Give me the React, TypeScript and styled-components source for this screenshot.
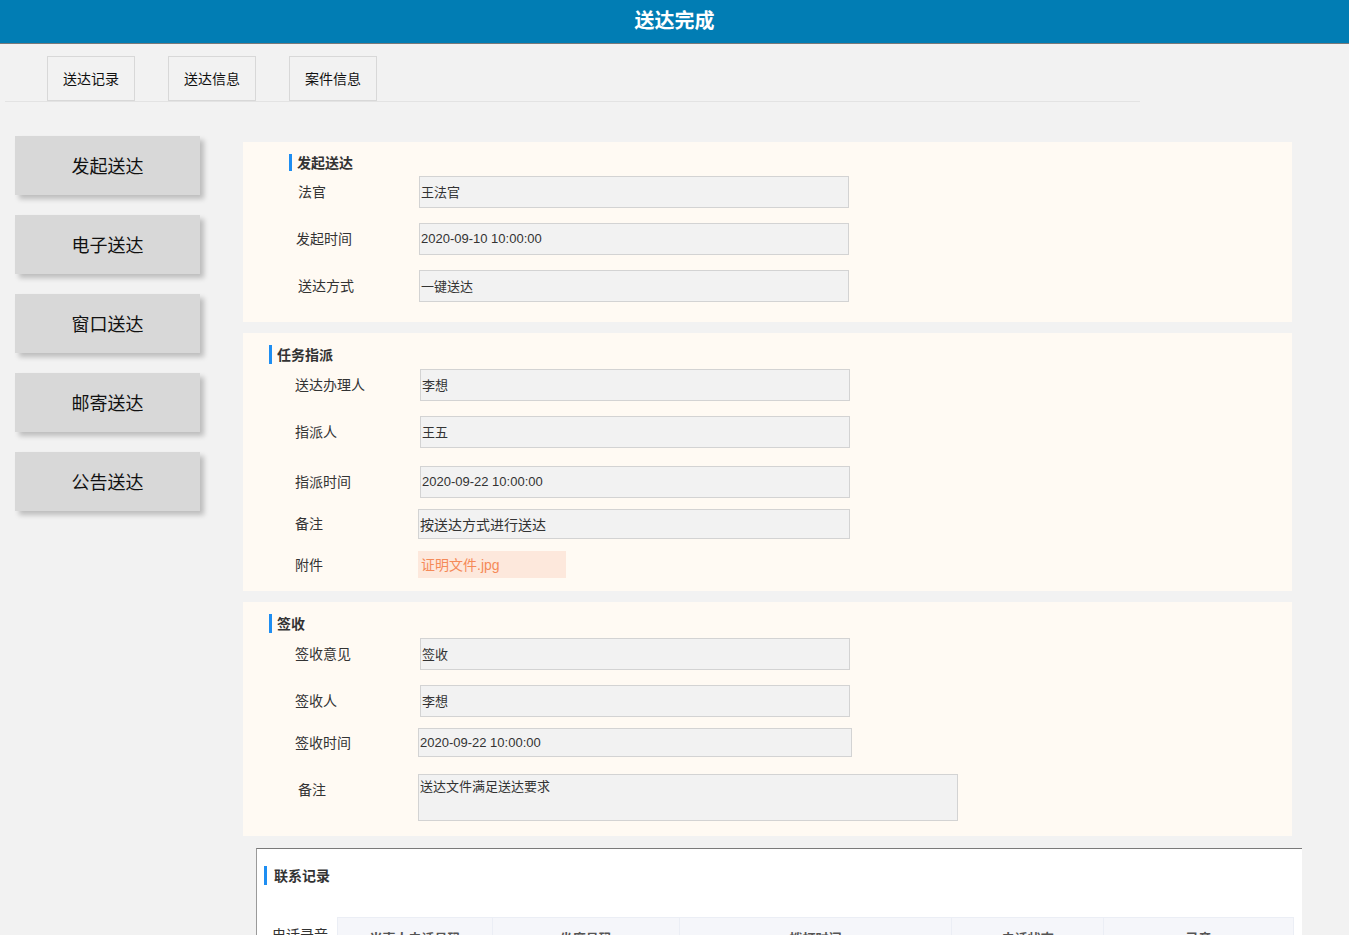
import React from "react";
import styled, { createGlobalStyle } from "styled-components";

const Global = createGlobalStyle`
  html, body { margin: 0; padding: 0; background: #f2f2f2; }
  body { font-family: "Liberation Sans", "Noto Sans CJK SC", sans-serif; color: #333; }
  * { box-sizing: border-box; }
`;

const Header = styled.header`
  height: 44px;
  background: #017db4;
  border-bottom: 1px solid #7a7a7a;
  display: flex;
  align-items: center;
  justify-content: center;
  color: #fff;
  font-size: 20px;
  font-weight: bold;
  padding-bottom: 5px;
`;

const TabBar = styled.nav`
  margin: 12px 0 0 5px;
  width: 1135px;
  height: 46px;
  border-bottom: 1px solid #e3e3e3;
  display: flex;
  gap: 33px;
  padding-left: 42px;
`;

const Tab = styled.div`
  width: 88px;
  height: 45px;
  border: 1px solid #d8d8d8;
  display: flex;
  align-items: center;
  justify-content: center;
  font-size: 14px;
  color: #111;
  padding-bottom: 2px;
`;

const Body = styled.div`
  display: flex;
  margin-top: 34px;
`;

const Sidebar = styled.aside`
  width: 243px;
  flex-shrink: 0;
  padding-left: 15px;
  display: flex;
  flex-direction: column;
  gap: 20px;
`;

const SideButton = styled.div`
  width: 185px;
  height: 59px;
  background: #d8d8d8;
  box-shadow: 4px 4px 5px rgba(0, 0, 0, 0.22);
  display: flex;
  align-items: center;
  justify-content: center;
  font-size: 18px;
  color: #111;
  padding-bottom: 1px;
`;

const Main = styled.main`
  margin-top: 6px;
  display: flex;
  flex-direction: column;
  gap: 11px;
`;

const Panel = styled.section<{ $pb: number }>`
  width: 1049px;
  background: #fffaf3;
  padding: 12px 0 ${(p) => p.$pb}px;
  display: flex;
  flex-direction: column;
`;

const Title = styled.h3<{ $indent: number; $h: number }>`
  margin: 0 0 5px ${(p) => p.$indent}px;
  height: ${(p) => p.$h}px;
  border-left: 3px solid #1e8ef2;
  padding: 0 0 1px 5px;
  display: flex;
  align-items: center;
  font-size: 14px;
  font-weight: bold;
  color: #333;
`;

const Field = styled.div<{ $mt: number; $top?: boolean }>`
  display: flex;
  align-items: ${(p) => (p.$top ? "flex-start" : "center")};
  margin-top: ${(p) => p.$mt}px;
`;

const Label = styled.div<{ $indent: number; $w: number; $pt?: number }>`
  margin-left: ${(p) => p.$indent}px;
  width: ${(p) => p.$w}px;
  padding-top: ${(p) => p.$pt ?? 0}px;
  padding-bottom: 2px;
  font-size: 14px;
  color: #333;
  flex-shrink: 0;
`;

const Value = styled.div<{ $w: number; $h: number; $fs?: number; $top?: boolean }>`
  width: ${(p) => p.$w}px;
  height: ${(p) => p.$h}px;
  background: #f2f2f2;
  border: 1px solid #d3d3d3;
  padding: ${(p) => (p.$top ? "1px 1px 0" : "0 1px 1px")};
  display: flex;
  align-items: ${(p) => (p.$top ? "flex-start" : "center")};
  font-size: ${(p) => p.$fs ?? 13}px;
  color: #333;
`;

const Attachment = styled.div`
  width: 148px;
  height: 27px;
  background: #fde8dc;
  color: #f58a58;
  font-size: 14px;
  display: flex;
  align-items: center;
  padding: 0 0 2px 3px;
`;

const RecordPanel = styled.section`
  margin: 1px 0 0 13px;
  width: 1046px;
  height: 200px;
  background: #fff;
  border-top: 1px solid #7a7a7a;
  border-left: 1px solid #9a9a9a;
  padding: 17px 8px 0 7px;
`;

const RecordTitle = styled.h3`
  margin: 0;
  height: 19px;
  border-left: 3px solid #1e8ef2;
  padding: 0 0 1px 7px;
  display: flex;
  align-items: center;
  font-size: 14px;
  font-weight: bold;
  color: #333;
`;

const RecordRow = styled.div`
  margin-top: 32px;
  display: flex;
  align-items: flex-start;
`;

const RecordLabel = styled.div`
  width: 73px;
  padding: 7px 0 0 8px;
  font-size: 14px;
  color: #333;
  flex-shrink: 0;
`;

const Table = styled.table`
  width: 957px;
  border-collapse: collapse;
  font-size: 13px;
`;

const Th = styled.th<{ $w: number }>`
  width: ${(p) => p.$w}px;
  height: 40px;
  background: #f5f6fa;
  border: 1px solid #ebeef5;
  color: #555;
  font-weight: bold;
  text-align: center;
`;

type F = {
  label: string;
  value: string;
  mt: number;
  w?: number;
  h?: number;
  fs?: number;
  shift?: number;
  textarea?: boolean;
  labelPt?: number;
  labelShift?: number;
};

function Fields({ items, indent, labelW }: { items: F[]; indent: number; labelW: number }) {
  return (
    <>
      {items.map((f) => (
        <Field key={f.label + f.value} $mt={f.mt} $top={f.textarea}>
          <Label $indent={indent + (f.labelShift ?? 0)} $w={labelW - (f.labelShift ?? 0) + (f.shift ?? 0)} $pt={f.labelPt}>
            {f.label}
          </Label>
          <Value $w={f.w ?? 430} $h={f.h ?? 32} $fs={f.fs} $top={f.textarea}>
            {f.value}
          </Value>
        </Field>
      ))}
    </>
  );
}

export default function App() {
  return (
    <>
      <Global />
      <Header>送达完成</Header>
      <TabBar>
        <Tab>送达记录</Tab>
        <Tab>送达信息</Tab>
        <Tab>案件信息</Tab>
      </TabBar>
      <Body>
        <Sidebar>
          {["发起送达", "电子送达", "窗口送达", "邮寄送达", "公告送达"].map((t) => (
            <SideButton key={t}>{t}</SideButton>
          ))}
        </Sidebar>
        <Main>
          <Panel $pb={20}>
            <Title $indent={46} $h={17}>发起送达</Title>
            <Fields
              indent={55}
              labelW={121}
              items={[
                { label: "法官", value: "王法官", mt: 0 },
                { label: "发起时间", value: "2020-09-10 10:00:00", mt: 15, labelShift: -2 },
                { label: "送达方式", value: "一键送达", mt: 15 },
              ]}
            />
          </Panel>
          <Panel $pb={13}>
            <Title $indent={26} $h={19}>任务指派</Title>
            <Fields
              indent={52}
              labelW={125}
              items={[
                { label: "送达办理人", value: "李想", mt: 0 },
                { label: "指派人", value: "王五", mt: 15 },
                { label: "指派时间", value: "2020-09-22 10:00:00", mt: 18 },
                { label: "备注", value: "按送达方式进行送达", mt: 11, h: 30, w: 432, shift: -2, fs: 14 },
              ]}
            />
            <Field $mt={12}>
              <Label $indent={52} $w={123}>附件</Label>
              <Attachment>证明文件.jpg</Attachment>
            </Field>
          </Panel>
          <Panel $pb={15}>
            <Title $indent={26} $h={19}>签收</Title>
            <Fields
              indent={52}
              labelW={125}
              items={[
                { label: "签收意见", value: "签收", mt: 0 },
                { label: "签收人", value: "李想", mt: 15 },
                { label: "签收时间", value: "2020-09-22 10:00:00", mt: 11, h: 29, w: 434, shift: -2 },
                {
                  label: "备注",
                  value: "送达文件满足送达要求",
                  mt: 17,
                  h: 47,
                  w: 540,
                  shift: -2,
                  textarea: true,
                  labelPt: 5,
                  labelShift: 3,
                },
              ]}
            />
          </Panel>
          <RecordPanel>
            <RecordTitle>联系记录</RecordTitle>
            <RecordRow>
              <RecordLabel>电话录音</RecordLabel>
              <Table>
                <thead>
                  <tr>
                    <Th $w={155}>当事人电话号码</Th>
                    <Th $w={187}>坐席号码</Th>
                    <Th $w={273}>拨打时间</Th>
                    <Th $w={152}>电话状态</Th>
                    <Th $w={190}>录音</Th>
                  </tr>
                </thead>
              </Table>
            </RecordRow>
          </RecordPanel>
        </Main>
      </Body>
    </>
  );
}
